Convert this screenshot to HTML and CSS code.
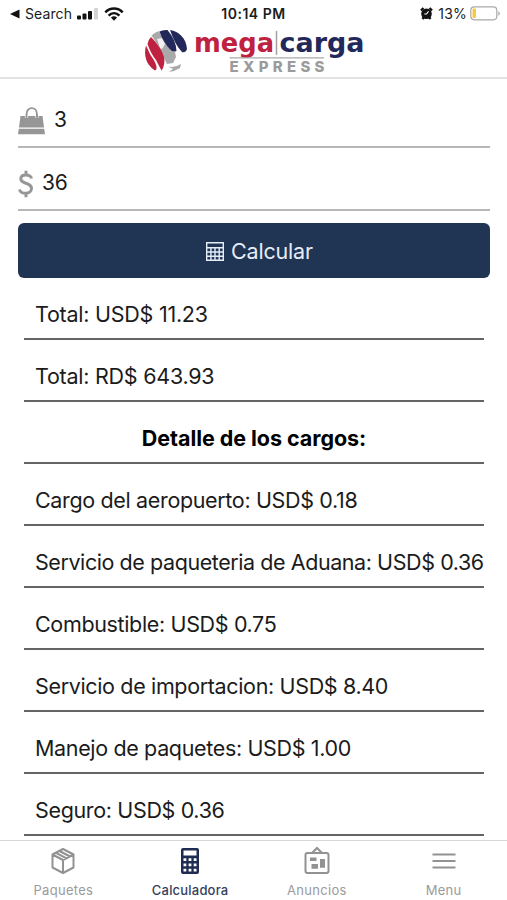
FILE: index.html
```html
<!DOCTYPE html>
<html lang="es">
<head>
<meta charset="utf-8">
<title>Mega Carga Express</title>
<link rel="stylesheet" href="styles.css">
</head>
<body>
<div class="app">
  <div class="status">
    <div class="status-left">
      <svg width="10" height="10" viewBox="0 0 10 10"><path d="M0 5 9.500 .5v9z" fill="#111"/></svg>
      <span class="back">Search</span>
      <svg class="signal" width="21" height="12" viewBox="0 0 21 12"><g fill="#111"><rect x="0" y="7.500" width="4" height="4" rx="1"/><rect x="5.500" y="5.500" width="4" height="6" rx="1"/><rect x="11" y="3" width="4" height="8.500" rx="1"/></g><rect x="17" y="0" width="4" height="11.500" rx="1" fill="#d4d4d4"/></svg>
      <svg class="wifi" width="20" height="14" viewBox="0 0 20 14"><g fill="none" stroke="#111" stroke-width="2.500"><path d="M1.300 5.300C6.300.3 13.700.3 18.700 5.300"/><path d="M4.600 8.700C7.800 5.500 12.200 5.500 15.400 8.700"/></g><path d="M6.900 10.600Q10 8.100 13.100 10.600L10 13.700z" fill="#111"/></svg>
    </div>
    <div class="time">10:14 PM</div>
    <div class="status-right">
      <svg width="13" height="13" viewBox="0 0 13 13"><circle cx="6.500" cy="6.800" r="5.300" fill="#111"/><path d="M1 3.500 3.500 1M12 3.500 9.500 1M2.500 12l1.500-2M10.500 12 9 10" stroke="#111" stroke-width="2.400"/><path d="M8.500 4.300 6.500 7H4.300" stroke="#fff" stroke-width="1.100" fill="none"/></svg>
      <span class="percent">13%</span>
      <svg class="battery" width="30" height="15" viewBox="0 0 30 15"><rect x=".8" y=".8" width="26" height="13" rx="3.500" fill="#fff" stroke="#a9a9a9" stroke-width="1.200"/><rect x="2.500" y="2.500" width="3.500" height="9.600" rx="1.300" fill="#f5ca43"/><path d="M28.300 5v5q3-2.500 0-5z" fill="#a9a9a9"/></svg>
    </div>
  </div>

  <header class="header">
    <svg width="222" height="48" viewBox="0 0 222 48" role="img" aria-label="Mega Carga Express">
      <path d="M8.500 8.500Q12 5 16 4L21 14 28 24 32 25 33 30 30 36 24 37 21 31 16 20z" fill="#a9a9aa"/>
      <path d="M14 12l5-1 3 6-3 5-2-1z" fill="#f1f1f2"/>
      <path d="M25 39.500Q32 41 38 37L37 41 31 44 26 45 30 42z" fill="#a9a9aa"/>
      <path d="M8 10Q5 13 4.500 17 8 27 13 33 16 39 18.500 43.500 22.500 38 21 30 18 20 8 10z" fill="#bf2140"/>
      <path d="M3 18.500C.5 28 3 38 12 43.500 15.500 42.500 13 35 7.500 28z" fill="#bf2140"/>
      <path d="M16.500 4.500Q20 2.500 24.500 3 33 13 33.500 24 30 25.500 27.500 23 20 15 16.500 4.500z" fill="#23285a"/>
      <path d="M27 3C36 4.500 43 11 44 22Q42.500 26 39 25 32 18 27 3z" fill="#23285a"/>
      <text class="brand red" x="51" y="24.500" textLength="80" lengthAdjust="spacingAndGlyphs">mega</text>
      <path d="M133.500 4v24" stroke="#a2a2a2" stroke-width="1.500"/>
      <text class="brand navy" x="136.500" y="24.500" textLength="85" lengthAdjust="spacingAndGlyphs">carga</text>
      <path d="M86.500 30.800h94.500" stroke="#aaa" stroke-width="1.300"/>
      <text class="express" x="86.500" y="45" textLength="95">EXPRESS</text>
    </svg>
  </header>

  <main class="content">
    <div class="field weight">
      <svg width="27" height="28" viewBox="0 0 27 28"><path d="M2.500 9h22L26 20.500H1z" fill="#969696"/><path d="M.8 21.700h25.400L27 27.200H0z" fill="#969696"/><path d="M8.500 11V7.500C8.500-1 19-1 19 7.500V11" fill="none" stroke="#fff" stroke-width="3.200"/><path d="M8.500 11V7.500C8.500-1 19-1 19 7.500V11" fill="none" stroke="#969696" stroke-width="1.900"/></svg>
      <span>3</span>
    </div>
    <div class="field price">
      <svg width="16" height="28" viewBox="0 0 16 28"><path d="M13.500 8.500C12.500 4 3 3.500 2.800 8.800 2.600 14.500 13.700 12 13.500 18.500 13.300 25 2.500 24.500 1.500 19.500M8 .8v4M8 23v4.200" fill="none" stroke="#969696" stroke-width="3"/></svg>
      <span>36</span>
    </div>
    <button class="calculate">
      <svg width="18" height="19" viewBox="0 0 18 19"><path d="M.7.700h16.600v17.600H.7zM.7 5.800h16.600M.7 10h16.600M.7 14.200h16.600M4.900 6v12M9 6v12M13.200 6v12" fill="none" stroke="#e5edf9" stroke-width="1.400"/></svg>
      <span>Calcular</span>
    </button>
    <div class="results">
      <div class="row total">Total: USD$ 11.23</div>
      <div class="row total">Total: RD$ 643.93</div>
      <div class="row title">Detalle de los cargos:</div>
      <div class="row">Cargo del aeropuerto: USD$ 0.18</div>
      <div class="row long">Servicio de paqueteria de Aduana: USD$ 0.36</div>
      <div class="row">Combustible: USD$ 0.75</div>
      <div class="row">Servicio de importacion: USD$ 8.40</div>
      <div class="row">Manejo de paquetes: USD$ 1.00</div>
      <div class="row">Seguro: USD$ 0.36</div>
    </div>
  </main>

  <nav class="tabs">
    <div class="tab">
      <svg width="28" height="30" viewBox="0 0 28 30"><path d="M14 3 24.500 8.500v13L14 27 3.500 21.500v-13zM3.500 8.500 14 14l10.500-5.500M14 14v13M10.500 5l10.500 5.500M7 6.800l10.500 5.500" fill="none" stroke="#929292" stroke-width="2" stroke-linejoin="round"/></svg>
      <span>Paquetes</span>
    </div>
    <div class="tab active">
      <svg width="28" height="30" viewBox="0 0 28 30"><rect x="5" y="2" width="18" height="26" rx="2" fill="#202d52"/><path d="M7.500 4.500h13v5h-13zM7.500 12.200h2.800V15H7.500zM12.600 12.200h2.800V15h-2.800zM17.700 12.200h2.800V15h-2.800zM7.500 17.500h2.800v2.800H7.500zM12.600 17.500h2.800v2.800h-2.800zM17.700 17.500h2.800v2.800h-2.800zM7.500 22.800h2.800v2.800H7.500zM12.600 22.800h2.800v2.800h-2.800zM17.700 22.800h2.800v2.800h-2.800z" fill="#fff"/></svg>
      <span>Calculadora</span>
    </div>
    <div class="tab">
      <svg width="28" height="30" viewBox="0 0 28 30"><rect x="2.500" y="7" width="23" height="20" rx="2" fill="none" stroke="#929292" stroke-width="2"/><path d="M9 7l5-5 5 5" fill="none" stroke="#929292" stroke-width="2"/><path d="M7 11.500h6.500V15H7zM8.500 18h6.500v4.800H8.500zM17 13h5v8.800h-5z" fill="#929292"/></svg>
      <span>Anuncios</span>
    </div>
    <div class="tab">
      <svg width="28" height="30" viewBox="0 0 28 30"><path d="M2.500 8.500h23M2.500 15h23M2.500 21.500h23" stroke="#929292" stroke-width="2.200"/></svg>
      <span>Menu</span>
    </div>
  </nav>
</div>
</body>
</html>
```

FILE: styles.css
```css
* {
  box-sizing: border-box;
}

body {
  margin: 0;
  background: #fff;
  color: #1b1b1c;
  font-family: Inter, "Liberation Sans", sans-serif;
}

svg {
  display: block;
  flex: none;
}

.app {
  display: flex;
  flex-direction: column;
  height: 900px;
  overflow: hidden;
}

.status {
  display: grid;
  grid-template-columns: 1fr auto 1fr;
  flex: none;
  height: 27px;
  padding: 0 7px 0 10px;
  align-items: center;
  font-size: 14px;
  line-height: 27px;
}

.status-left,
.status-right {
  display: flex;
  align-items: center;
}

.status-right {
  justify-content: flex-end;
}

.back {
  margin-left: 5px;
  letter-spacing: 0.1px;
}

.signal {
  margin-left: 5px;
}

.wifi {
  margin-left: 6px;
}

.time {
  margin-right: 3px;
  font-weight: 600;
  letter-spacing: 0.5px;
}

.percent {
  margin: 0 3px 0 5px;
  letter-spacing: 0.2px;
}

.header {
  display: flex;
  flex: none;
  justify-content: center;
  height: 52px;
  border-bottom: 2px solid #e2e2e2;
}

.brand {
  font-family: "DejaVu Sans", sans-serif;
  font-size: 26px;
  font-weight: 700;
}

.red {
  fill: #bf2140;
}

.navy {
  fill: #23285a;
}

.express {
  fill: #9b9b9b;
  font-size: 15px;
  font-weight: 800;
}

.content {
  display: flex;
  flex: 1;
  flex-direction: column;
  min-height: 0;
  padding: 0 17px 0 18px;
  overflow: hidden;
}

.field {
  display: flex;
  flex: none;
  border-bottom: 2px solid #b7b7b7;
  font-size: 21px;
  line-height: 26px;
}

.weight {
  height: 69px;
  padding-top: 28px;
  gap: 9px;
}

.price {
  height: 63px;
  padding-top: 22px;
  gap: 8px;
  letter-spacing: -0.3px;
}

.calculate {
  display: flex;
  flex: none;
  align-items: center;
  justify-content: center;
  gap: 7px;
  height: 55px;
  margin: 12px 0 0;
  padding: 1px 0 0 11px;
  border: 0;
  border-radius: 6px;
  background: #203453;
  color: #e5edf9;
  font: 400 21.5px Inter, sans-serif;
  letter-spacing: -0.2px;
}

.results {
  margin: 0 6px;
}

.row {
  height: 62px;
  padding: 22px 0 0 11px;
  border-bottom: 2px solid #646464;
  font-size: 21.5px;
  line-height: 28px;
  letter-spacing: -0.35px;
  white-space: nowrap;
}

.total {
  letter-spacing: -0.25px;
}

.long {
  letter-spacing: -0.43px;
}

.title {
  padding-left: 0;
  color: #000;
  font-weight: 700;
  letter-spacing: -0.05px;
  text-align: center;
}

.tabs {
  display: grid;
  grid-template-columns: repeat(4, 1fr);
  flex: none;
  height: 60px;
  border-top: 1px solid #d8d8d8;
  background: #fff;
}

.tab {
  display: flex;
  flex-direction: column;
  align-items: center;
  padding-top: 5px;
  color: #9b9b9b;
  font-size: 13px;
  line-height: 18px;
  letter-spacing: 0.3px;
}

.tab span {
  margin-top: 5px;
}

.active {
  color: #36415b;
  font-weight: 500;
  letter-spacing: 0.2px;
}
```
